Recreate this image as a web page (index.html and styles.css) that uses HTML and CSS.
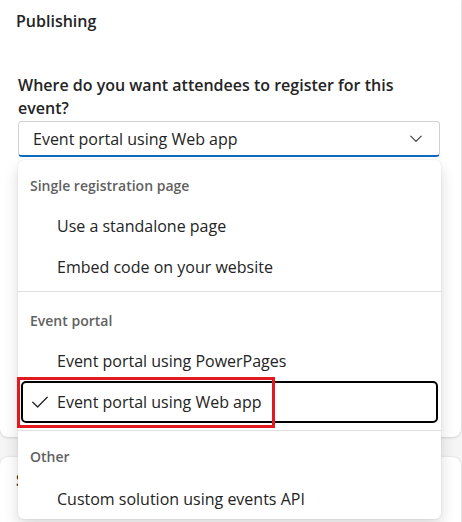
FILE: index.html
```html
<!DOCTYPE html>
<html lang="en">
<head>
<meta charset="utf-8">
<title>Publishing</title>
<link rel="stylesheet" href="styles.css">
</head>
<body>
<div class="page">
  <section class="card card-publishing">
    <h2 class="card-title">Publishing</h2>
    <div class="field">
      <label class="field-label">Where do you want attendees to register for this event?</label>
      <div class="combo">
        <div class="combo-trigger">
          <span class="combo-value">Event portal using Web app</span>
          <svg class="chevron" width="12" height="8" viewBox="0 0 12 8"><polyline points="0.8,1.2 6,6.4 11.2,1.2" fill="none" stroke="#424242" stroke-width="1.2" stroke-linecap="round" stroke-linejoin="round"/></svg>
        </div>
        <div class="listbox">
          <div class="group group-first">
            <div class="group-header">Single registration page</div>
            <div class="option"><span class="check"></span><span>Use a standalone page</span></div>
            <div class="option"><span class="check"></span><span>Embed code on your website</span></div>
          </div>
          <div class="group group-second">
            <div class="group-header">Event portal</div>
            <div class="option"><span class="check"></span><span>Event portal using PowerPages</span></div>
            <div class="option option-selected"><span class="check"><svg width="16" height="12" viewBox="0 0 16 12"><polyline points="0.8,6.3 5.6,11 15.2,1.2" fill="none" stroke="#242424" stroke-width="1.3" stroke-linecap="round" stroke-linejoin="round"/></svg></span><span>Event portal using Web app</span></div>
          </div>
          <div class="group group-last">
            <div class="group-header">Other</div>
            <div class="option"><span class="check"></span><span>Custom solution using events API</span></div>
          </div>
          <div class="annotation"></div>
        </div>
      </div>
    </div>
  </section>
  <section class="card card-next">
    <h2 class="card-title">Sessions</h2>
  </section>
</div>
</body>
</html>
```
FILE: styles.css
```css
* { box-sizing: border-box; }
html, body { margin: 0; padding: 0; }
body {
  background: #f5f5f5;
  font-family: "Open Sans", "Noto Sans", sans-serif;
  color: #242424;
  width: 462px;
  height: 522px;
  overflow: hidden;
}
.page {
  display: flex;
  flex-direction: column;
  gap: 20px;
  padding-right: 1px;
}
.card {
  background: #ffffff;
  border-radius: 8px;
  box-shadow: 0 0 2px rgba(0,0,0,0.12), 0 1px 3px rgba(0,0,0,0.10);
}
.card-publishing {
  border-radius: 0 0 8px 8px;
  height: 437px;
  padding: 10px 0 0 0;
}
.card-title {
  margin: 0;
  padding-left: 16px;
  font-size: 16px;
  line-height: 22px;
  font-weight: 600;
}
.field {
  padding: 42px 21px 0 18px;
}
.field-label {
  display: block;
  max-width: 400px;
  font-size: 16px;
  line-height: 23px;
  font-weight: 600;
  margin-bottom: 1px;
}
.combo {
  position: relative;
}
.combo-trigger {
  height: 36px;
  display: flex;
  align-items: center;
  justify-content: space-between;
  padding: 0 17px 0 14px;
  border: 1px solid #d1d1d1;
  border-bottom: 2px solid #0f6cbd;
  border-radius: 4px;
  background: #fff;
  font-size: 16px;
}
.chevron { display: block; margin-top: 1px; }
.listbox {
  position: absolute;
  top: calc(100% + 3px);
  left: 0;
  width: 423px;
  background: #fff;
  border-radius: 6px;
  padding: 4px 4px 0 4px;
  box-shadow: 0 0 2px rgba(0,0,0,0.12), 0 8px 16px rgba(0,0,0,0.14);
}
.group-header {
  height: 40px;
  display: flex;
  align-items: center;
  padding-left: 8px;
  font-size: 14px;
  font-weight: 600;
  color: #616161;
}
.group { display: flex; flex-direction: column; gap: 1px; }
.group-first { gap: 1px; padding: 1px 4px 4px 4px; border-bottom: 1px solid #e0e0e0; margin: 0 -4px; }
.group-second { padding: 8px 4px 8px 4px; border-bottom: 1px solid #e0e0e0; margin: 0 -4px; }
.group-last { padding-top: 5px; gap: 3px; }
.option {
  height: 40px;
  display: flex;
  align-items: center;
  padding-left: 10px;
  font-size: 16px;
  border-radius: 4px;
}
.check {
  width: 25px;
  display: flex;
  align-items: center;
}
.check svg { display: block; }
.option-selected {
  outline: 2px solid #000;
  outline-offset: -1px;
}
.annotation {
  position: absolute;
  left: -1px;
  top: 217px;
  width: 258px;
  height: 51px;
  border: 3px solid #e2191f;
}
.card-next {
  height: 80px;
  padding-top: 12px;
}
```
